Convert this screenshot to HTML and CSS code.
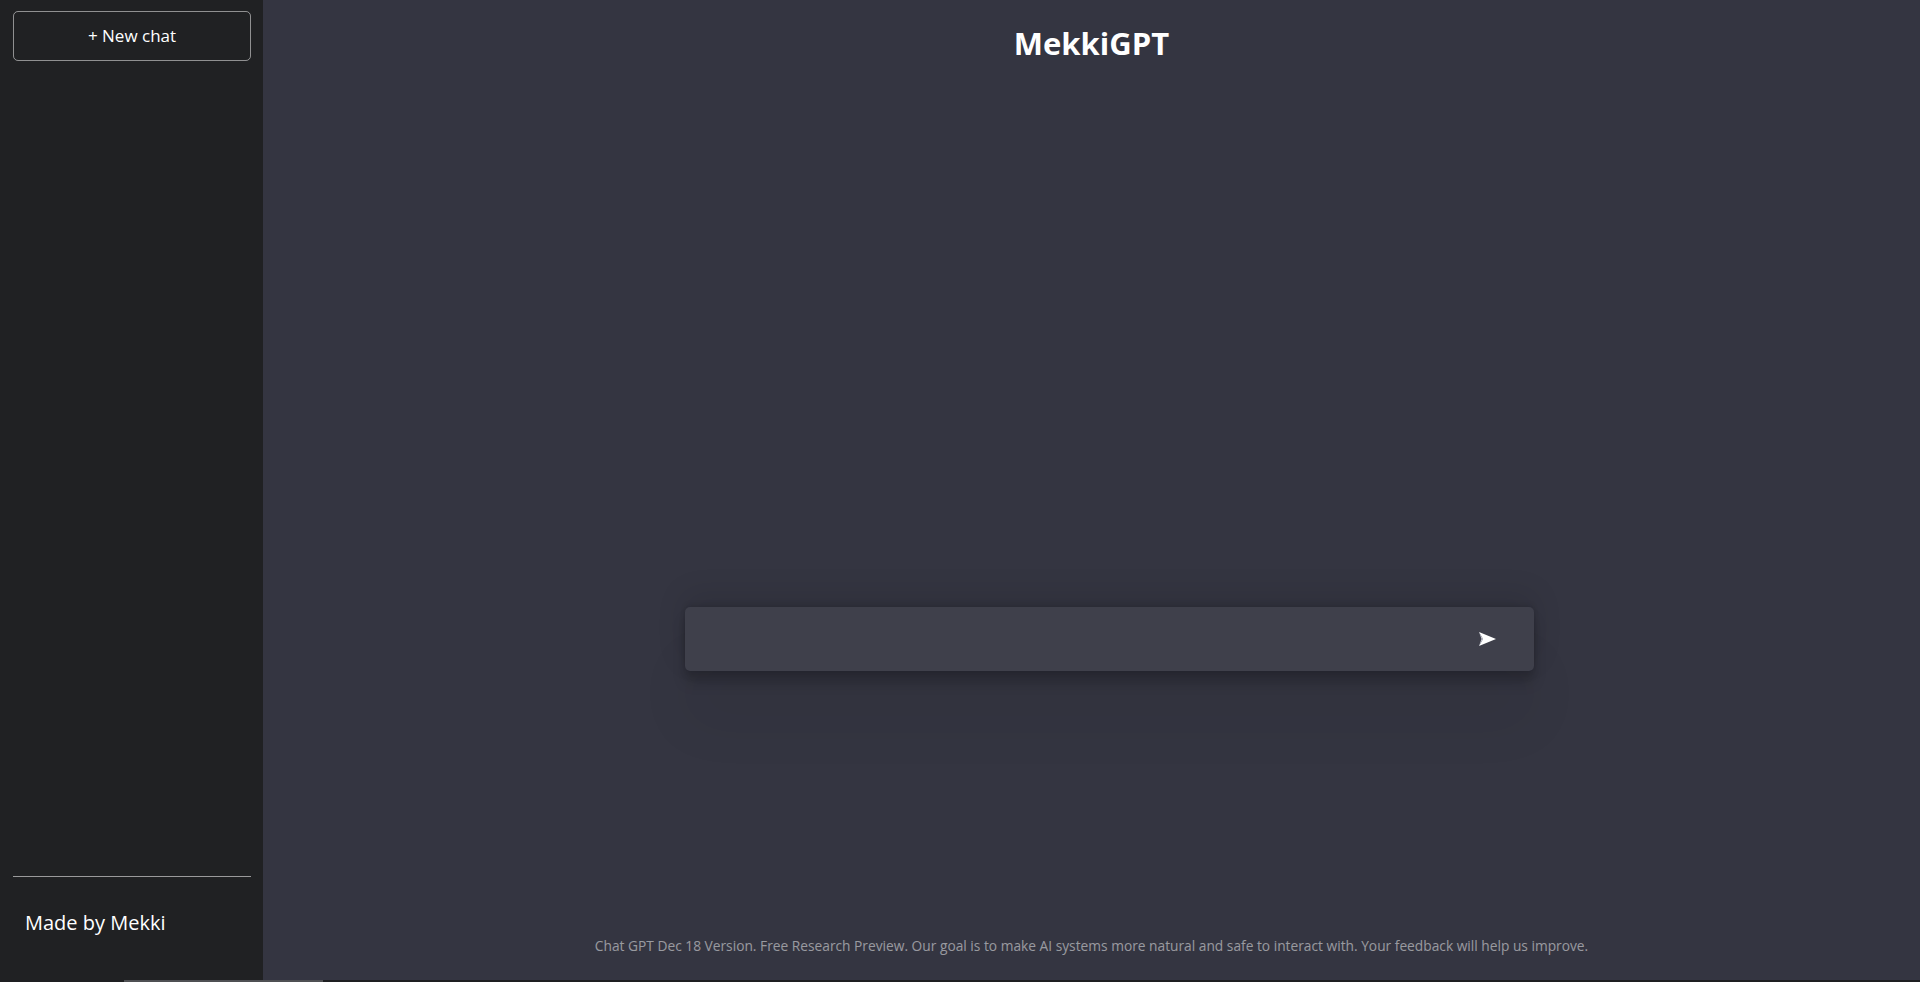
FILE: index.html
```
<!DOCTYPE html>
<html lang="en">
<head>
<meta charset="utf-8">
<title>MekkiGPT</title>
<link rel="stylesheet" href="styles.css">
</head>
<body>
<div class="app">
  <section class="sidebar">
    <button class="new-chat">+ New chat</button>
    <nav class="nav">
      <p class="made-by">Made by Mekki</p>
    </nav>
  </section>
  <section class="main">
    <h1 class="title">MekkiGPT</h1>
    <div class="bottom-section">
      <div class="input-container">
        <input class="prompt" type="text">
        <div class="submit">
          <svg width="17" height="14" viewBox="0 0 17 14"><polygon points="0,0 17,7 0,14 4,7" fill="#ffffff"/><polygon points="0,0 4,7 0,14 2.5,7" fill="#c9cbd6"/></svg>
        </div>
      </div>
      <p class="info">Chat GPT Dec 18 Version. Free Research Preview. Our goal is to make AI systems more natural and safe to interact with. Your feedback will help us improve.</p>
    </div>
  </section>
</div>
<div class="hscroll"><div class="thumb"></div></div>
</body>
</html>
```
FILE: styles.css
```
* { box-sizing: border-box; }
html, body { margin: 0; padding: 0; }
body {
  background-color: #343541;
  color: #ffffff;
  font-family: "Open Sans", "Liberation Sans", sans-serif;
  overflow: hidden;
}
.app {
  display: flex;
  height: 980px;
}
.sidebar {
  background-color: #202123;
  width: 263px;
  flex: 0 0 263px;
  height: 100%;
  display: flex;
  flex-direction: column;
  justify-content: space-between;
}
.new-chat {
  margin: 11px 12px 0 13px;
  width: 238px;
  height: 50px;
  border: 1px solid rgba(255,255,255,0.5);
  border-radius: 5px;
  background: transparent;
  color: #ffffff;
  font-family: "Open Sans", "Liberation Sans", sans-serif;
  font-size: 17px;
  padding: 0 0 2px 0;
}
.nav {
  margin: 0 12px 0 13px;
  border-top: 1px solid rgba(255,255,255,0.55);
  padding: 32px 12px 43px 12px;
}
.made-by {
  margin: 0;
  font-size: 20px;
  line-height: 28px;
}
.main {
  flex: 1;
  height: 100%;
  display: flex;
  flex-direction: column;
  align-items: center;
  justify-content: space-between;
  text-align: center;
}
.title {
  margin: 0;
  padding-top: 22px;
  font-size: 31px;
  line-height: 42px;
  font-weight: 700;
}
.bottom-section {
  display: flex;
  flex-direction: column;
  align-items: center;
  width: 100%;
}
.input-container {
  position: relative;
  width: 849px;
  margin-left: 36px;
}
.prompt {
  display: block;
  width: 100%;
  height: 64px;
  border: none;
  outline: none;
  border-radius: 5px;
  background-color: rgba(255,255,255,0.055);
  color: #ffffff;
  font-size: 20px;
  padding: 12px 15px;
  box-shadow: rgba(0,0,0,0.05) 0 54px 55px,
    rgba(0,0,0,0.1) 0 -12px 30px,
    rgba(0,0,0,0.1) 0 4px 6px,
    rgba(0,0,0,0.15) 0 12px 13px,
    rgba(0,0,0,0.08) 0 -3px 5px;
}
.submit {
  position: absolute;
  right: 38px;
  top: 25px;
  width: 17px;
  height: 14px;
  line-height: 0;
}
.info {
  margin: 266px 0 0 0;
  padding-bottom: 25px;
  font-size: 13.75px;
  line-height: 18px;
  color: rgba(255,255,255,0.5);
}
.hscroll {
  height: 2px;
  background-color: #1e1f21;
}
.thumb {
  margin-left: 124px;
  width: 199px;
  height: 2px;
  background-color: #4f5053;
}
```
